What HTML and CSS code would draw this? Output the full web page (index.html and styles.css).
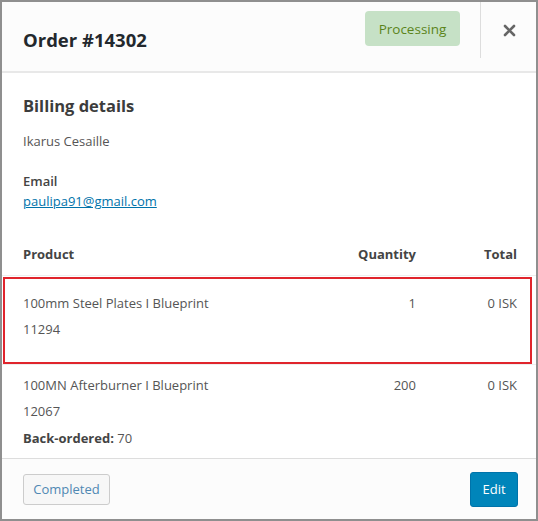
FILE: index.html
```html
<!DOCTYPE html>
<html lang="en">
<head>
<meta charset="utf-8">
<title>Order #14302</title>
<link rel="stylesheet" href="styles.css">
</head>
<body>
<div class="modal">
  <header class="modal-header">
    <h1 class="title">Order #14302</h1>
    <mark class="status">Processing</mark>
    <button class="close" aria-label="Close">
      <svg width="13" height="13" viewBox="0 0 13 13"><path d="M2 2 L11 11 M11 2 L2 11" stroke="#666" stroke-width="2.6" stroke-linecap="round"/></svg>
    </button>
  </header>
  <div class="modal-body">
    <section class="billing">
      <h2 class="section-title">Billing details</h2>
      <p class="name">Ikarus Cesaille</p>
      <p class="email"><strong>Email</strong><a href="#">paulipa91@gmail.com</a></p>
    </section>
    <div class="items">
      <div class="row head">
        <div class="c-prod">Product</div>
        <div class="c-qty">Quantity</div>
        <div class="c-total">Total</div>
      </div>
      <div class="row item first">
        <div class="c-prod">100mm Steel Plates I Blueprint<div class="sku">11294</div></div>
        <div class="c-qty">1</div>
        <div class="c-total">0 ISK</div>
      </div>
      <div class="row item second">
        <div class="c-prod">100MN Afterburner I Blueprint<div class="sku">12067</div><div class="meta"><strong>Back-ordered:</strong> 70</div></div>
        <div class="c-qty">200</div>
        <div class="c-total">0 ISK</div>
      </div>
    </div>
  </div>
  <footer class="modal-footer">
    <button class="btn btn-secondary">Completed</button>
    <button class="btn btn-primary">Edit</button>
  </footer>
</div>
</body>
</html>
```

FILE: styles.css
```css
* { box-sizing: border-box; }
html, body { margin: 0; padding: 0; }
body {
  font-family: "Open Sans", "Noto Sans", sans-serif;
  font-size: 13px;
  color: #555;
  background: #fff;
}
.modal {
  width: 538px;
  height: 521px;
  border: 2px solid #8f8f8f;
  display: flex;
  flex-direction: column;
  background: #fff;
  overflow: hidden;
}
.modal-header {
  height: 71px;
  flex: none;
  background: #fcfcfc;
  border-bottom: 2px solid #e8e8e8;
  display: flex;
  align-items: flex-start;
  padding-left: 21px;
}
.title {
  margin: 26px 0 0;
  font-size: 18.5px;
  line-height: 24px;
  font-weight: 700;
  color: #23282d;
  flex: 1;
}
.status {
  margin-top: 9px;
  width: 95px;
  height: 35px;
  background: #c6e1c6;
  color: #5b841b;
  border-radius: 4px;
  font-size: 13.5px;
  display: flex;
  align-items: center;
  justify-content: center;
}
.close {
  margin-left: 20px;
  width: 56px;
  height: 56px;
  border: 0;
  border-left: 1px solid #ddd;
  background: transparent;
  padding: 0 0 0 2px;
  display: flex;
  align-items: center;
  justify-content: center;
}
.modal-body {
  flex: 1;
  overflow: hidden;
}
.billing {
  padding: 21px 21px 0;
}
.section-title {
  margin: 0;
  font-size: 16.5px;
  line-height: 24px;
  font-weight: 700;
  color: #3c3c3c;
}
.name {
  margin: 13px 0 0;
  line-height: 20px;
}
.email {
  margin: 20px 0 0;
  line-height: 20px;
  display: flex;
  flex-direction: column;
  align-items: flex-start;
}
.email strong { color: #444; font-weight: 600; }
.email a { color: #0073aa; text-decoration: underline; }
.items { margin-top: 33px; }
.row {
  display: grid;
  grid-template-columns: 1fr auto 101px;
  padding: 0 19px 0 21px;
  border-bottom: 1px solid #eee;
  line-height: 20px;
}
.c-qty, .c-total { text-align: right; }
.head {
  padding-bottom: 11px;
  font-weight: 700;
  color: #444;
}
.item { line-height: 26px; }
.first {
  position: relative;
  padding-top: 14px;
  padding-bottom: 22px;
}
.first::after {
  content: "";
  position: absolute;
  left: 1px;
  right: 4px;
  top: 1px;
  bottom: 0;
  border: 2px solid #e0242c;
  pointer-events: none;
}
.second { padding-top: 7px; padding-bottom: 20px; }
.meta { line-height: 28px; }
.meta strong { color: #444; font-weight: 700; }
.modal-footer {
  flex: none;
  height: 61px;
  background: #fcfcfc;
  border-top: 1px solid #ddd;
  display: flex;
  align-items: center;
  justify-content: space-between;
  padding: 0 18px 0 21px;
}
.btn {
  font-family: inherit;
  font-size: 13px;
  border-radius: 3px;
  cursor: pointer;
}
.btn-secondary {
  width: 87px;
  height: 31px;
  background: #f7f7f7;
  border: 1px solid #ccc;
  color: #4f88b3;
}
.btn-primary {
  width: 48px;
  height: 35px;
  background: #0085ba;
  border: 1px solid #0073aa;
  color: #fff;
}
```
